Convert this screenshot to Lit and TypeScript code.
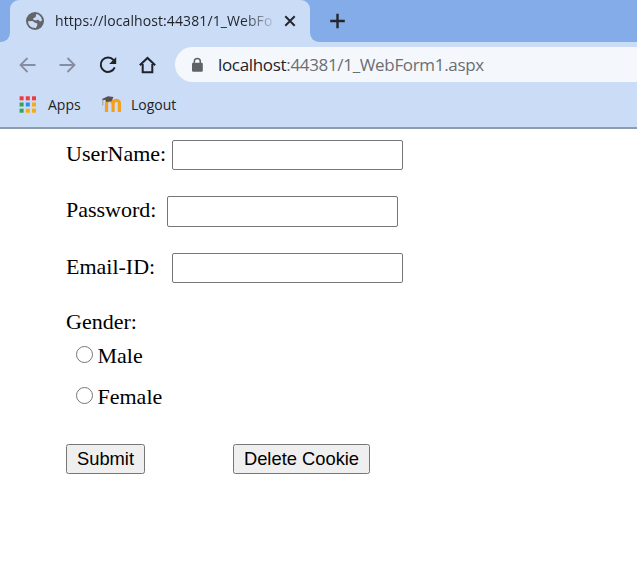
import { LitElement, html, css, svg } from "lit";
import { customElement } from "lit/decorators.js";

const appColors = ["#f03a3c", "#f03a3c", "#f03a3c", "#34a35c", "#2a8cf5", "#f9ab0a", "#34a35c", "#f9ab0a", "#f9ab0a"];

@customElement("browser-chrome")
class BrowserChrome extends LitElement {
  static styles = css`
    :host { display: block; font-family: "Open Sans", "Noto Sans", sans-serif; color: #1f2227; white-space: nowrap; }
    svg { display: block; flex: none; }
    .strip { display: flex; height: 42px; background: #cbdcf6; }
    .edge { width: 10px; background: #84ace9; border-bottom-right-radius: 9px; flex: none; }
    .tabwrap { width: 300px; flex: none; background: linear-gradient(#84ace9 50%, #cbdcf6 50%); }
    .tab { height: 42px; box-sizing: border-box; background: #cbdcf6; border-radius: 9px 9px 0 0; display: flex; align-items: center; padding-left: 16px; }
    .title { width: 218px; margin-left: 11px; overflow: hidden; font-size: 14px; line-height: 24px; letter-spacing: 0.1px;
      -webkit-mask-image: linear-gradient(90deg, #000 86%, transparent 102%); mask-image: linear-gradient(90deg, #000 86%, transparent 102%); }
    .close { margin-left: 11px; }
    .rest { flex: 1; background: #84ace9; border-bottom-left-radius: 9px; padding: 13px 0 0 19px; }
    .bar { display: flex; height: 45px; align-items: center; background: #cbdcf6; padding-left: 18px; }
    .bar .icon { margin-right: 20px; }
    .omni { margin-left: -3px; flex: 1; height: 35px; box-sizing: border-box; background: #f4f8fd; border-radius: 18px 0 0 18px; display: flex; align-items: center; padding-left: 16px; }
    .url { margin-left: 14px; font-size: 17px; line-height: 30px; letter-spacing: -0.33px; color: #6b6e72; }
    .host { color: #1f2227; }
    .marks { display: flex; align-items: center; height: 40px; background: #cbdcf6; padding: 0 0 5px 17px; box-sizing: border-box; font-size: 14px; }
    .apps { margin-left: 12px; width: 53px; }
    .cap { margin-bottom: 2px; }
    .logout { margin-left: 10px; }
    .line { height: 2px; background: #8c9cb3; }
  `;
  render() {
    return html`
      <div class="strip">
        <div class="edge"></div>
        <div class="tabwrap"><div class="tab">
          <svg width="18" height="18" viewBox="0 0 18 18"><circle cx="9" cy="9" r="9" fill="#62666b"/>
            <path d="M10.2 2C13.6 2.6 15.8 5.2 16 8.6L14 9.4L12 7.6L10 8.4L7.4 7.8L7.2 6.2L9.6 5.2Z M2 9.2L6.6 9L8.6 10.6L11.4 11.4L11.2 13.4L9.8 15.9C5.4 16.2 2.2 13.4 2 9.2Z" fill="#cbdcf6"/></svg>
          <div class="title">https://localhost:44381/1_WebForm1.aspx</div>
          <svg class="close" width="12" height="12" viewBox="0 0 12 12"><path d="M1.3 1.3L10.7 10.7M10.7 1.3L1.3 10.7" stroke="#24282e" stroke-width="2"/></svg>
        </div></div>
        <div class="rest"><svg width="16" height="16" viewBox="0 0 16 16"><path d="M8.5 .7V15.3M1.2 8H15.8" stroke="#24282e" stroke-width="2.4"/></svg></div>
      </div>
      <div class="bar">
        <svg class="icon" width="20" height="20" viewBox="0 0 20 20"><path d="M17.5 10H3M9.5 3L2.5 10L9.5 17" fill="none" stroke="#858d9e" stroke-width="1.8"/></svg>
        <svg class="icon" width="20" height="20" viewBox="0 0 20 20"><path d="M1.5 10H16M9.5 3L16.5 10L9.5 17" fill="none" stroke="#858d9e" stroke-width="1.8"/></svg>
        <svg class="icon" width="20" height="20" viewBox="0 0 20 20"><path d="M15.6 5.2A7.2 7.2 0 1 0 16.7 12.3" fill="none" stroke="#202328" stroke-width="2"/><path d="M18.2 2V9H11.2Z" fill="#202328"/></svg>
        <svg class="icon" width="20" height="20" viewBox="0 0 20 20"><path d="M1.8 10.3L9.5 3L17.2 10.3M4.7 9V17.2H14.3V9" fill="none" stroke="#202328" stroke-width="2"/></svg>
        <div class="omni">
          <svg width="13" height="16" viewBox="0 0 13 16"><path d="M3.3 7V4.4a3 3 0 0 1 6 0V7" fill="none" stroke="#5f6368" stroke-width="1.5"/><rect x="1" y="5.8" width="10.8" height="9" rx="1.2" fill="#5f6368"/></svg>
          <div class="url"><span class="host">localhost</span>:44381/1_WebForm1.aspx</div>
        </div>
      </div>
      <div class="marks">
        <svg width="19" height="18" viewBox="0 0 19 18">${appColors.map((c, i) => svg`<rect x=${2.6 + (i % 3) * 6.2} y=${0.3 + Math.floor(i / 3) * 6.2} width="4" height="4" fill=${c}/>`)}</svg>
        <span class="apps">Apps</span>
        <svg class="cap" width="20" height="18" viewBox="0 0 20 18">
          <path d="M5.5 17V9Q5.5 5.3 8.6 5.3T12.1 9V17M12.1 9Q12.2 5.3 15.4 5.3T18.4 9V17" fill="none" stroke="#f5a01d" stroke-width="3.2"/>
          <path d="M1 4L7 1.2L12.5 2L10.5 6.3L5.2 7L4.3 4.7L2 5.2Z" fill="#56524f"/><path d="M1.8 4.5V10.5" stroke="#9b8b78" stroke-width=".8"/></svg>
        <span class="logout">Logout</span>
      </div>
      <div class="line"></div>`;
  }
}

@customElement("app-root")
class AppRoot extends LitElement {
  static styles = css`
    :host { display: block; height: 566px; overflow: hidden; background: #fff; }
    .page { padding: 11px 0 0 66px; font: 22px/26px "Liberation Serif", "Times New Roman", serif; color: #000; }
    .field { display: flex; height: 30px; align-items: center; margin-bottom: 26px; }
    .field.mid { height: 31px; }
    .label { width: 106px; padding-bottom: 2px; }
    .mid .label { width: 101px; padding-bottom: 4px; }
    input { margin: 0; box-sizing: border-box; }
    .text { width: 231px; height: 100%; border: 1px solid #767676; border-radius: 2px; background: #fff; padding: 1px 3px; font: 18px "Liberation Sans", Arial, sans-serif; }
    .gender { height: 26px; margin-top: 25px; }
    .option { display: flex; align-items: center; height: 26px; padding-left: 10px; margin-top: 8px; }
    .option + .option { margin-top: 15px; }
    .radio { appearance: none; width: 17px; height: 17px; border: 1px solid #767676; border-radius: 50%; margin: 0 4.5px 3px 0; background: #fff; }
    .actions { display: flex; gap: 88px; margin-top: 34px; }
    .btn { height: 30px; box-sizing: border-box; margin: 0; padding: 0; width: 79px; border: 1px solid #767676; border-radius: 2.5px; background: #efefef; color: #000; font: 18.33px "Liberation Sans", Arial, sans-serif; }
    .wide { width: 137px; }
  `;
  render() {
    return html`
      <browser-chrome></browser-chrome>
      <div class="page">
        <div class="field"><label class="label">UserName:</label><input class="text" type="text"></div>
        <div class="field mid"><label class="label">Password:</label><input class="text" type="password"></div>
        <div class="field"><label class="label">Email-ID:</label><input class="text" type="text"></div>
        <div class="gender">Gender:</div>
        <label class="option"><input class="radio" type="radio" name="gender">Male</label>
        <label class="option"><input class="radio" type="radio" name="gender">Female</label>
        <div class="actions"><button class="btn">Submit</button><button class="btn wide">Delete Cookie</button></div>
      </div>`;
  }
}
